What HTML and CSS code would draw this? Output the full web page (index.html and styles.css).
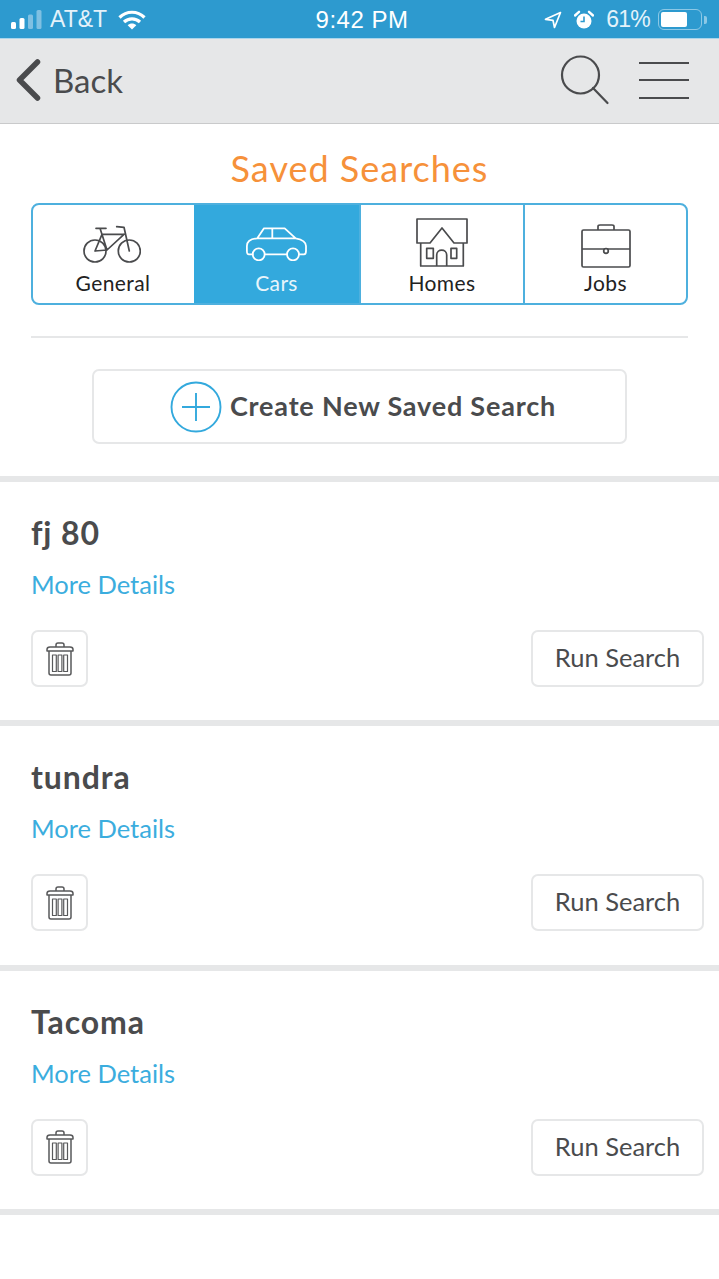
FILE: index.html
```html
<!DOCTYPE html>
<html lang="en">
<head>
<meta charset="utf-8">
<title>Saved Searches</title>
<link rel="stylesheet" href="styles.css">
</head>
<body>
<div class="status">
  <div class="status-side">
    <svg class="signal" viewBox="0 0 32 20" width="32" height="20"><rect x="0" y="12" width="5" height="7" rx="1.5" fill="#fff"/><rect x="8.500" y="8" width="5" height="11" rx="1.500" fill="#fff"/><rect x="17" y="4.500" width="5" height="14.500" rx="1.500" fill="#7fc0e2"/><rect x="25.500" y="0" width="5" height="19" rx="1.500" fill="#7fc0e2"/></svg>
    <span class="carrier">AT&amp;T</span>
    <svg class="wifi" viewBox="0 0 28 20" width="28" height="20"><path d="M1.500 7.500C8.500 .5 19.500 .5 26.500 7.500" fill="none" stroke="#fff" stroke-width="3.200"/><path d="M6 12C10.500 7.700 17.500 7.700 22 12" fill="none" stroke="#fff" stroke-width="3.200"/><path d="M14 19.500L9.700 15.300C12 13 16 13 18.300 15.300Z" fill="#fff"/></svg>
  </div>
  <div class="clock">9:42 PM</div>
  <div class="status-side status-right">
    <svg class="loc" viewBox="0 0 18 18" width="18" height="18"><path d="M16.500 1.500L1.500 8.300 9 9.300 10.500 16.500Z" fill="none" stroke="#fff" stroke-width="1.700" stroke-linejoin="round"/></svg>
    <svg class="alarm" viewBox="0 0 20 20" width="20" height="20"><circle cx="10" cy="11" r="7.500" fill="#fff"/><path d="M10 6.500V11.500H6.500" fill="none" stroke="#2d9acf" stroke-width="1.600"/><path d="M1 5.500L5 1.800M19 5.500L15 1.800" stroke="#fff" stroke-width="2.400" stroke-linecap="round"/></svg>
    <span class="pct">61%</span>
    <div class="battery"><div class="battery-fill"></div></div>
    <div class="battery-tip"></div>
  </div>
</div>

<header class="nav">
  <div class="back">
    <svg viewBox="0 0 26 42" width="26" height="42"><path d="M22.500 3L4.500 21 22.500 39" fill="none" stroke="#4a4b4d" stroke-width="5.500" stroke-linecap="round" stroke-linejoin="round"/></svg>
    <span>Back</span>
  </div>
  <div class="nav-icons">
    <svg viewBox="0 0 50 50" width="50" height="50"><circle cx="20.500" cy="20" r="18.500" fill="none" stroke="#4a4b4d" stroke-width="2.200"/><path d="M33 33L47.500 48" fill="none" stroke="#4a4b4d" stroke-width="2.200" stroke-linecap="round"/></svg>
    <div class="burger"><i></i><i></i><i></i></div>
  </div>
</header>

<main>
  <section class="top">
    <h1>Saved Searches</h1>
    <div class="tabs">
      <div class="tab tab-first">
        <svg class="ico-bike" viewBox="0 0 58 38" width="58" height="38" fill="none" stroke="#4a4b4d" stroke-width="1.700" stroke-linecap="round" stroke-linejoin="round"><circle cx="12" cy="26" r="11"/><circle cx="46.300" cy="26" r="11"/><path d="M13 3.300H23M17 3.300L24 25M19 9.300H41M41 9.300L24 25M12 26L24 25M12 26L19 9.300M33.700 1.700L41 2.300 46.300 26"/></svg>
        <span>General</span>
      </div>
      <div class="tab tab-on">
        <svg class="ico-car" viewBox="0 -1 61 34" width="61" height="34" fill="none" stroke="#fff" stroke-width="1.800" stroke-linecap="round" stroke-linejoin="round"><path d="M6.700 26.300H3C1 26.300 .9 25 .9 23V18C.9 14 4 11 11.300 10.300L18 .3H38.700L49.700 10.300C56 11.500 60 14 60 18V23C60 25 59.500 26.300 58 26.300H53M18.700 26.300H41M11.300 10.300H49.700M26.300 .3V10.300"/><circle cx="12.700" cy="26.300" r="6"/><circle cx="47" cy="26.300" r="6"/></svg>
        <span>Cars</span>
      </div>
      <div class="tab">
        <svg viewBox="-1 -1 52 50" width="52" height="50" fill="none" stroke="#4a4b4d" stroke-width="1.700" stroke-linejoin="round"><path d="M0 24V0H50V24H37L25 9 13 24ZM3.700 24V47H46.300V24"/><path d="M19.700 47V36C19.700 29.500 29.700 29.500 29.700 36V47M9.700 29.300H16.300V39.300H9.700ZM34 29.300H39.700V39.300H34Z"/></svg>
        <span>Homes</span>
      </div>
      <div class="tab">
        <svg viewBox="0 0 50 44" width="50" height="44" fill="none" stroke="#4a4b4d" stroke-width="1.700" stroke-linejoin="round"><rect x="1" y="6" width="48" height="37" rx="1.500"/><path d="M17 6V2.500C17 1.500 18 1 19 1H31C32 1 33 1.500 33 2.500V6M1 25H49"/><circle cx="25" cy="27" r="2.300" fill="#fff"/></svg>
        <span>Jobs</span>
      </div>
    </div>
    <hr class="rule">
    <div class="create">
      <svg viewBox="0 0 52 52" width="52" height="52" fill="none" stroke="#33a9dd" stroke-width="1.900"><circle cx="26" cy="26" r="24.500"/><path d="M12 26H40M26 12V40"/></svg>
      <span class="create-label">Create New Saved Search</span>
    </div>
  </section>

  <article class="item">
    <h2>fj 80</h2>
    <a class="more">More Details</a>
    <div class="actions">
      <div class="trash"><svg viewBox="0 0 28 34" width="28" height="34" fill="none" stroke="#58595b" stroke-width="1.500" stroke-linejoin="round"><path d="M1 7.500C1 5.500 2 5 4 5H24C26 5 27 5.500 27 7.500V9H1ZM10 5V3C10 1.500 11 1 12 1H16C17 1 18 1.500 18 3V5M3 9V31C3 32.500 4 33 5 33H23C24 33 25 32.500 25 31V9"/><path d="M6.500 13H10.300V29.500H6.500ZM12.100 13H15.900V29.500H12.100ZM17.700 13H21.500V29.500H17.700Z" stroke-width="1.200"/></svg></div>
      <div class="run">Run Search</div>
    </div>
  </article>
  <article class="item">
    <h2>tundra</h2>
    <a class="more">More Details</a>
    <div class="actions">
      <div class="trash"><svg viewBox="0 0 28 34" width="28" height="34" fill="none" stroke="#58595b" stroke-width="1.500" stroke-linejoin="round"><path d="M1 7.500C1 5.500 2 5 4 5H24C26 5 27 5.500 27 7.500V9H1ZM10 5V3C10 1.500 11 1 12 1H16C17 1 18 1.500 18 3V5M3 9V31C3 32.500 4 33 5 33H23C24 33 25 32.500 25 31V9"/><path d="M6.500 13H10.300V29.500H6.500ZM12.100 13H15.900V29.500H12.100ZM17.700 13H21.500V29.500H17.700Z" stroke-width="1.200"/></svg></div>
      <div class="run">Run Search</div>
    </div>
  </article>
  <article class="item">
    <h2>Tacoma</h2>
    <a class="more">More Details</a>
    <div class="actions">
      <div class="trash"><svg viewBox="0 0 28 34" width="28" height="34" fill="none" stroke="#58595b" stroke-width="1.500" stroke-linejoin="round"><path d="M1 7.500C1 5.500 2 5 4 5H24C26 5 27 5.500 27 7.500V9H1ZM10 5V3C10 1.500 11 1 12 1H16C17 1 18 1.500 18 3V5M3 9V31C3 32.500 4 33 5 33H23C24 33 25 32.500 25 31V9"/><path d="M6.500 13H10.300V29.500H6.500ZM12.100 13H15.900V29.500H12.100ZM17.700 13H21.500V29.500H17.700Z" stroke-width="1.200"/></svg></div>
      <div class="run">Run Search</div>
    </div>
  </article>
</main>
</body>
</html>
```
FILE: styles.css
```css
* { box-sizing: border-box; }
html, body { margin: 0; padding: 0; }
body {
  width: 719px;
  height: 1279px;
  overflow: hidden;
  background: #fff;
  font-family: "Lato", "Open Sans", sans-serif;
  color: #4a4b4d;
}
svg { display: block; flex: none; }

.status {
  height: 39px;
  background: #2d9acf;
  border-bottom: 1px solid #a9d5ec;
  display: grid;
  grid-template-columns: 1fr auto 1fr;
  align-items: center;
  padding: 1px 11px 0;
  color: #fff;
  font-family: "Liberation Sans", sans-serif;
  font-size: 23px;
}
.status-side { display: flex; align-items: center; }
.status-right { justify-content: flex-end; }
.carrier { margin-left: 7px; color: #e4f2fa; }
.wifi { margin-left: 11px; }
.clock { font-size: 24px; letter-spacing: .5px; padding-left: 5px; }
.loc { margin-right: 12px; }
.alarm { margin-right: 12px; }
.pct { color: #e4f2fa; margin-right: 8px; letter-spacing: -.8px; }
.battery {
  width: 44px;
  height: 21px;
  border: 1.500px solid #8cc8e6;
  border-radius: 6px;
  padding: 2px;
}
.battery-fill { width: 26px; height: 100%; background: #fff; border-radius: 2px; }
.battery-tip { width: 3px; height: 8px; margin-left: 2px; margin-right: 1px; background: #8cc8e6; border-radius: 0 2px 2px 0; }

.nav {
  height: 85px;
  background: #e6e7e8;
  border-bottom: 1px solid #c9cacb;
  display: flex;
  justify-content: space-between;
  align-items: center;
  padding: 0 30px 0 15px;
}
.back { display: flex; align-items: center; gap: 12px; font-size: 33px; padding-bottom: 2px; }
.nav-icons { display: flex; align-items: center; gap: 29px; padding-bottom: 2px; }
.burger { width: 50px; display: flex; flex-direction: column; gap: 15.500px; }
.burger i { display: block; height: 2px; background: #4a4b4d; }

.top { height: 358px; padding: 0 31px; border-bottom: 6px solid #e6e7e8; display: flex; flex-direction: column; align-items: stretch; }
h1 {
  margin: 21px 0 0;
  height: 47px;
  line-height: 47px;
  text-align: center;
  font-size: 36px;
  font-weight: 400;
  letter-spacing: 1px;
  color: #f6913a;
}
.tabs {
  margin-top: 11px;
  height: 102px;
  border: 2px solid #4eb0de;
  border-radius: 8px;
  display: grid;
  grid-template-columns: 161px 165px 164px 1fr;
  overflow: hidden;
}
.tab {
  display: flex;
  flex-direction: column;
  align-items: center;
  justify-content: flex-end;
  gap: 2px;
  padding-bottom: 8px;
  font-size: 21px;
  line-height: 25px;
  letter-spacing: .4px;
  color: #222;
  border-left: 2px solid #4eb0de;
}
.tab-first { border-left: 0; padding-right: 4px; }
.tab-on { background: #33a9dd; color: #e8f5fb; border-left: 0; }
.tab-first span { margin-left: 3px; }
.ico-bike { margin-bottom: 5px; }
.ico-car { margin-bottom: 7px; }

.rule { width: 100%; margin: 31px 0 0; border: 0; height: 2px; background: #e6e7e8; }
.create {
  margin: 31px 61px 0;
  height: 75px;
  border: 2px solid #e6e7e8;
  border-radius: 7px;
  display: flex;
  align-items: center;
  justify-content: center;
  gap: 8px;
  padding-left: 7px;
  font-size: 27px;
  font-weight: 700;
  letter-spacing: .8px;
}
.create-label { margin-bottom: 2px; }

.item { height: 244.300px; padding: 29px 15px 0 31px; border-bottom: 6px solid #e6e7e8; }
.item h2 { margin: 0; font-size: 32px; line-height: 44px; font-weight: 700; letter-spacing: .9px; }
.more { display: block; margin-top: 12px; font-size: 25.500px; line-height: 34px; color: #3badde; }
.actions { display: flex; justify-content: space-between; margin-top: 29px; }
.trash {
  width: 57px;
  height: 57px;
  border: 2px solid #e6e7e8;
  border-radius: 7px;
  display: flex;
  align-items: center;
  justify-content: center;
}
.run {
  width: 173px;
  height: 57px;
  padding-bottom: 3px;
  border: 2px solid #e6e7e8;
  border-radius: 7px;
  display: flex;
  align-items: center;
  justify-content: center;
  font-size: 25.500px;
}
```
